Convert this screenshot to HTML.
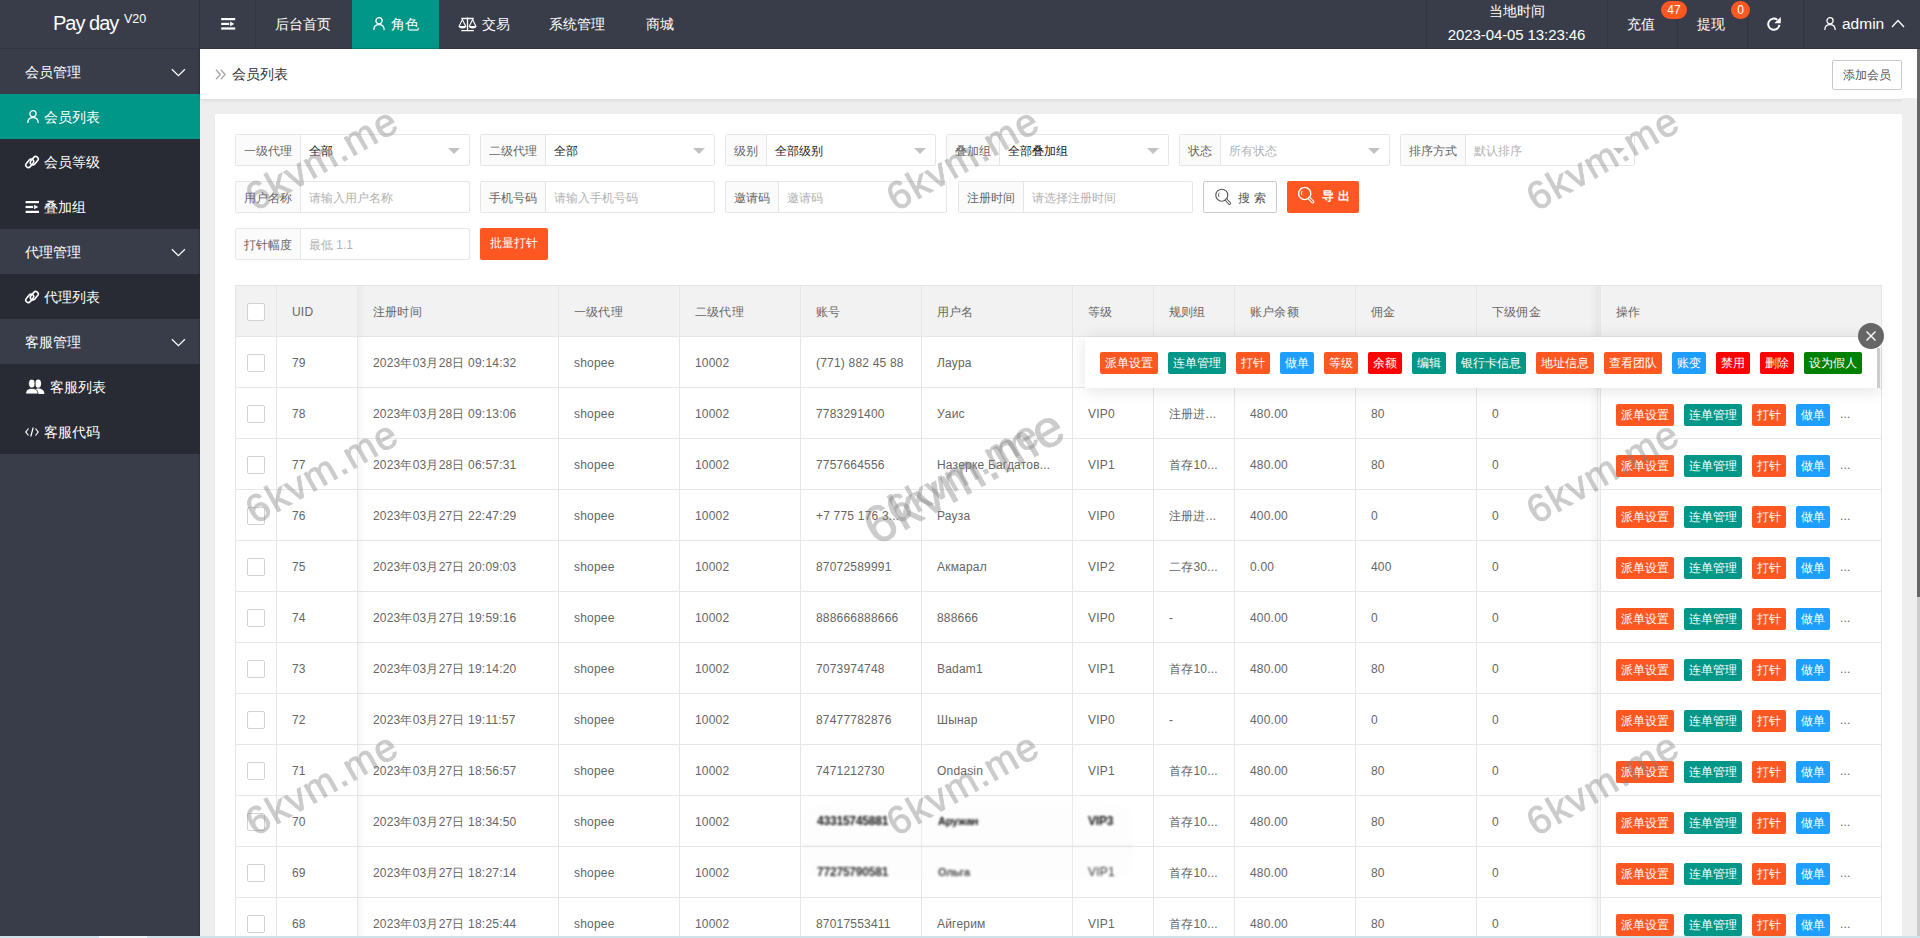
<!DOCTYPE html><html><head><meta charset="utf-8"><title>Pay day</title><style>
*{margin:0;padding:0;box-sizing:border-box}
html,body{width:1920px;height:938px;overflow:hidden;background:#eee;font-family:"Liberation Sans",sans-serif;color:#666;font-size:12px}
.abs{position:absolute}
#hdr{position:absolute;left:0;top:0;width:1920px;height:49px;background:#393D49}
.logo{position:absolute;left:0;top:0;width:199px;height:48px;color:#fff}
.sep{position:absolute;top:0;width:1px;height:48px;background:#32363f}
.nav{position:absolute;top:0;height:49px;color:#fff;font-size:14px;line-height:48px;white-space:nowrap}
.nav.on{background:#009688}
#side{position:absolute;left:0;top:49px;width:200px;height:889px;background:#393D49;box-shadow:inset -1px 0 0 #30343e}
#sideline{position:absolute;left:199px;top:0;width:1px;height:48px;background:#2f323c}
.si{position:absolute;left:0;width:200px;height:45px;line-height:45px;color:#fff;font-size:14px;white-space:nowrap}
.si.c{background:#282B33}
.si.on{background:#009688}
#bread{position:absolute;left:200px;top:49px;width:1717px;height:50px;background:#fff;box-shadow:0 1px 4px rgba(0,0,0,.1)}
#card{position:absolute;left:215px;top:114px;width:1687px;height:830px;background:#fff;box-shadow:0 1px 2px rgba(0,0,0,.06)}
.fi{position:absolute;height:32px;border:1px solid #e6e6e6;border-radius:2px;background:#fff}
.fl{position:absolute;left:0;top:0;height:30px;line-height:32px;background:#FBFBFB;border-right:1px solid #e6e6e6;color:#666;padding:0 8px;font-size:12px;white-space:nowrap}
.fv{position:absolute;top:0;height:30px;line-height:32px;font-size:12px;white-space:nowrap}
.fv.ph{color:#b2b2b2}
.fv.val{color:#222}
.tri{position:absolute;top:13px;width:0;height:0;border-left:6px solid transparent;border-right:6px solid transparent;border-top:6px solid #c2c2c2}
.btn{position:absolute;height:32px;line-height:30px;border-radius:2px;font-size:12px;text-align:center;white-space:nowrap}
#tbl{position:absolute;left:235px;top:285px;width:1647px;height:660px;border:1px solid #e6e6e6;background:#fff;overflow:hidden}
.th{position:absolute;left:0;top:0;width:1647px;height:51px;background:#F2F2F2;border-bottom:1px solid #e6e6e6}
.vl{position:absolute;top:0;width:1px;height:660px;background:#e6e6e6}
.hl{position:absolute;left:0;width:1647px;height:1px;background:#e6e6e6}
.t{position:absolute;white-space:nowrap;font-size:12px;color:#666;line-height:16px;letter-spacing:0.2px}
.cb{position:absolute;width:18px;height:18px;border:1px solid #d2d2d2;border-radius:2px;background:#fff}
.b{position:absolute;height:22px;line-height:22px;padding:0 5px;font-size:12px;color:#fff;border-radius:2px;white-space:nowrap}
.or{background:#FF5722}.tl{background:#009688}.bl{background:#1E9FFF}.rd{background:#FF0000}.gr{background:#008000}
.wm{position:absolute;font-family:"Liberation Sans",sans-serif;font-weight:normal;color:#808080;-webkit-text-stroke:0.9px #808080;opacity:.4;letter-spacing:1.4px;white-space:nowrap;transform-origin:center center;pointer-events:none}
</style></head><body>
<div id="hdr">
<div class="logo"><span class="abs" style="left:53px;top:11px;font-size:20px;line-height:24px;letter-spacing:-1px">Pay day</span><span class="abs" style="left:124px;top:11px;font-size:12.5px;line-height:16px">V20</span></div>
</div>
<div id="sideline"></div>
<div class="sep" style="left:255px"></div>
<svg class="abs" style="left:221px;top:18px" width="15" height="13" viewBox="0 0 15 13"><rect x="0.2" y="0" width="14" height="2.2" fill="#fff"/><rect x="0.2" y="4.8" width="8" height="2.2" fill="#fff"/><rect x="0.2" y="9.4" width="14" height="2.2" fill="#fff"/><path d="M9.1 3.6 L13.3 5.9 L9.1 8.2Z" fill="#fff"/></svg>
<div class="nav" style="left:255px;width:97px;padding-left:20px">后台首页</div>
<div class="nav on" style="left:352px;width:87px;padding-left:39px">角色</div>
<svg class="abs" style="left:373px;top:17px" width="12" height="13" viewBox="0 0 12 13"><circle cx="6" cy="3.8" r="3.1" fill="none" stroke="#fff" stroke-width="1.3"/><path d="M0.8 13 C0.8 9 3 7.6 6 7.6 C9 7.6 11.2 9 11.2 13" fill="none" stroke="#fff" stroke-width="1.3"/></svg>
<div class="nav" style="left:439px;width:90px;padding-left:43px">交易</div>
<svg class="abs" style="left:457px;top:16px" width="21" height="16" viewBox="0 0 21 16"><path d="M4.3 2.5 H16.8 M10.5 1.3 V14.6 M4.3 14.6 H16.8" stroke="#fff" stroke-width="1.3" fill="none"/><path d="M5.4 3.6 L2 10.5 H8.8Z M15.6 3.6 L12.2 10.5 H19Z" stroke="#fff" stroke-width="1.1" fill="none" stroke-linejoin="round"/><path d="M1.9 10.3 A3.5 2.2 0 0 0 8.9 10.3Z M12.1 10.3 A3.5 2.2 0 0 0 19.1 10.3Z" fill="#fff"/></svg>
<div class="nav" style="left:529px;width:97px;padding-left:20px">系统管理</div>
<div class="nav" style="left:626px;width:68px;padding-left:20px">商城</div>
<div class="sep" style="left:1426px"></div>
<div class="sep" style="left:1607px"></div>
<div class="sep" style="left:1677px"></div>
<div class="sep" style="left:1747px"></div>
<div class="sep" style="left:1803px"></div>
<div class="nav" style="left:1427px;width:179px;line-height:16px;text-align:center"><div class="abs" style="left:0;top:3px;width:179px;text-align:center;font-size:14px">当地时间</div><div class="abs" style="left:0;top:27px;width:179px;text-align:center;font-size:15px;letter-spacing:-0.1px">2023-04-05 13:23:46</div></div>
<div class="nav" style="left:1607px;width:70px;padding-left:20px;top:0px">充值</div>
<div class="abs" style="left:1661px;top:1px;width:26px;height:18px;border-radius:9px;background:#FF5722;color:#fff;font-size:12px;line-height:18px;text-align:center">47</div>
<div class="nav" style="left:1677px;width:70px;padding-left:20px">提现</div>
<div class="abs" style="left:1731px;top:1px;width:19px;height:18px;border-radius:9px;background:#FF5722;color:#fff;font-size:12px;line-height:18px;text-align:center">0</div>
<svg class="abs" style="left:1767px;top:17px" width="15" height="15" viewBox="0 0 15 15"><path d="M12.4 7.8 A5.6 5.6 0 1 1 10.2 2.7" fill="none" stroke="#fff" stroke-width="2"/><path d="M7.3 6.2 L13.8 0 L13.8 6.2Z" fill="#fff"/></svg>
<svg class="abs" style="left:1824px;top:17px" width="12" height="13" viewBox="0 0 12 13"><circle cx="6" cy="3.8" r="3.1" fill="none" stroke="#fff" stroke-width="1.3"/><path d="M0.8 13 C0.8 9 3 7.6 6 7.6 C9 7.6 11.2 9 11.2 13" fill="none" stroke="#fff" stroke-width="1.3"/></svg>
<div class="nav" style="left:1842px;font-size:15.5px">admin</div>
<svg class="abs" style="left:1891px;top:19px" width="14" height="9" viewBox="0 0 14 9"><path d="M1 8 L7 1.5 L13 8" fill="none" stroke="#fff" stroke-width="1.3"/></svg>
<div class="abs" style="left:0;top:48px;width:1920px;height:1px;background:rgba(0,0,0,.12)"></div>
<div id="side">
<div class="si" style="top:0px;padding-left:25px;line-height:47px">会员管理</div>
<svg class="abs" style="left:171px;top:19px" width="15" height="9" viewBox="0 0 15 9"><path d="M0.9 1.3 L7.4 7.6 L13.9 1.3" fill="none" stroke="#fff" stroke-width="1.25"/></svg>
<div class="si on" style="top:45px;padding-left:44px;line-height:47px">会员列表</div>
<div class="si c" style="top:90px;padding-left:44px;line-height:47px">会员等级</div>
<div class="si c" style="top:135px;padding-left:44px;line-height:47px">叠加组</div>
<div class="si" style="top:180px;padding-left:25px;line-height:47px">代理管理</div>
<svg class="abs" style="left:171px;top:199px" width="15" height="9" viewBox="0 0 15 9"><path d="M0.9 1.3 L7.4 7.6 L13.9 1.3" fill="none" stroke="#fff" stroke-width="1.25"/></svg>
<div class="si c" style="top:225px;padding-left:44px;line-height:47px">代理列表</div>
<div class="si" style="top:270px;padding-left:25px;line-height:47px">客服管理</div>
<svg class="abs" style="left:171px;top:289px" width="15" height="9" viewBox="0 0 15 9"><path d="M0.9 1.3 L7.4 7.6 L13.9 1.3" fill="none" stroke="#fff" stroke-width="1.25"/></svg>
<div class="si c" style="top:315px;padding-left:50px;line-height:47px">客服列表</div>
<div class="si c" style="top:360px;padding-left:44px;line-height:47px">客服代码</div>
</div>
<svg class="abs" style="left:27px;top:110px" width="12" height="13" viewBox="0 0 12 13"><circle cx="6" cy="3.8" r="3.1" fill="none" stroke="#fff" stroke-width="1.3"/><path d="M0.8 13 C0.8 9 3 7.6 6 7.6 C9 7.6 11.2 9 11.2 13" fill="none" stroke="#fff" stroke-width="1.3"/></svg>
<svg class="abs" style="left:24px;top:154px" width="16" height="16" viewBox="0 0 16 16"><g transform="rotate(-50 8 8)" fill="none" stroke="#fff" stroke-width="1.6"><rect x="0.8" y="4.6" width="9.4" height="5" rx="2.5"/><rect x="5.8" y="6.4" width="9.4" height="5" rx="2.5"/></g></svg>
<svg class="abs" style="left:24px;top:289px" width="16" height="16" viewBox="0 0 16 16"><g transform="rotate(-50 8 8)" fill="none" stroke="#fff" stroke-width="1.6"><rect x="0.8" y="4.6" width="9.4" height="5" rx="2.5"/><rect x="5.8" y="6.4" width="9.4" height="5" rx="2.5"/></g></svg>
<svg class="abs" style="left:25px;top:201px" width="15" height="13" viewBox="0 0 15 13"><rect x="0.6" y="0" width="13.4" height="2.2" fill="#fff"/><rect x="0.6" y="4.9" width="7.6" height="2.2" fill="#fff"/><rect x="0.6" y="9.8" width="13.4" height="2.2" fill="#fff"/><path d="M9.1 3.7 L13.3 6 L9.1 8.3Z" fill="#fff"/></svg>
<svg class="abs" style="left:25px;top:379px" width="20" height="16" viewBox="0 0 20 16"><ellipse cx="13.2" cy="4.6" rx="2.9" ry="4.2" fill="#fff"/><path d="M8.5 15 C8.7 11 10.5 9.6 13.2 9.6 C16.5 9.6 19.2 11 19.4 15Z" fill="#fff"/><ellipse cx="6.8" cy="4.6" rx="3.2" ry="4.4" fill="#fff" stroke="#282B33" stroke-width="0.9"/><path d="M0.6 15 C0.8 11 3 9.4 6.8 9.4 C10.6 9.4 12.8 11 13 15Z" fill="#fff" stroke="#282B33" stroke-width="0.9"/></svg>
<svg class="abs" style="left:25px;top:427px" width="14" height="10" viewBox="0 0 14 10"><path d="M3.5 1.5 L0.8 5 L3.5 8.5 M10.5 1.5 L13.2 5 L10.5 8.5 M8.2 0.5 L5.8 9.5" fill="none" stroke="#fff" stroke-width="1.2"/></svg>
<div id="bread"></div>
<svg class="abs" style="left:215px;top:69px" width="12" height="11" viewBox="0 0 12 11"><path d="M1 0.8 L5.3 5.5 L1 10.2 M5.8 0.8 L10.1 5.5 L5.8 10.2" fill="none" stroke="#aaa" stroke-width="1.4"/></svg>
<div class="t" style="left:232px;top:66px;font-size:14px;color:#333;line-height:16px;letter-spacing:0">会员列表</div>
<div class="btn" style="left:1832px;top:60px;width:70px;height:30px;line-height:28px;border:1px solid #C9C9C9;background:#fff;color:#555">添加会员</div>
<div id="card"></div>
<div class="fi" style="left:235px;top:134px;width:235px">
<div class="fl" style="width:65px">一级代理</div>
<div class="fv val" style="left:73px">全部</div>
<div class="tri" style="left:212px"></div>
</div>
<div class="fi" style="left:480px;top:134px;width:235px">
<div class="fl" style="width:65px">二级代理</div>
<div class="fv val" style="left:73px">全部</div>
<div class="tri" style="left:212px"></div>
</div>
<div class="fi" style="left:725px;top:134px;width:211px">
<div class="fl" style="width:41px">级别</div>
<div class="fv val" style="left:49px">全部级别</div>
<div class="tri" style="left:188px"></div>
</div>
<div class="fi" style="left:946px;top:134px;width:223px">
<div class="fl" style="width:53px">叠加组</div>
<div class="fv val" style="left:61px">全部叠加组</div>
<div class="tri" style="left:200px"></div>
</div>
<div class="fi" style="left:1179px;top:134px;width:211px">
<div class="fl" style="width:41px">状态</div>
<div class="fv ph" style="left:49px">所有状态</div>
<div class="tri" style="left:188px"></div>
</div>
<div class="fi" style="left:1400px;top:134px;width:235px">
<div class="fl" style="width:65px">排序方式</div>
<div class="fv ph" style="left:73px">默认排序</div>
<div class="tri" style="left:212px"></div>
</div>
<div class="fi" style="left:235px;top:181px;width:235px">
<div class="fl" style="width:65px">用户名称</div>
<div class="fv ph" style="left:73px">请输入用户名称</div>
</div>
<div class="fi" style="left:480px;top:181px;width:235px">
<div class="fl" style="width:65px">手机号码</div>
<div class="fv ph" style="left:73px">请输入手机号码</div>
</div>
<div class="fi" style="left:725px;top:181px;width:222px">
<div class="fl" style="width:53px">邀请码</div>
<div class="fv ph" style="left:61px">邀请码</div>
</div>
<div class="fi" style="left:958px;top:181px;width:235px">
<div class="fl" style="width:65px">注册时间</div>
<div class="fv ph" style="left:73px">请选择注册时间</div>
</div>
<div class="fi" style="left:235px;top:228px;width:235px">
<div class="fl" style="width:65px">打针幅度</div>
<div class="fv ph" style="left:73px">最低 1.1</div>
</div>
<div class="btn" style="left:1203px;top:181px;width:74px;height:32px;border:1px solid #C9C9C9;background:#fff;color:#555"></div>
<svg class="abs" style="left:1214px;top:188px" width="18" height="18" viewBox="0 0 18 18"><circle cx="7.8" cy="7.2" r="6" fill="none" stroke="#555" stroke-width="1.1"/><path d="M12.3 11.9 L15.6 15.4" stroke="#555" stroke-width="3" stroke-linecap="round"/><path d="M12.3 11.9 L15.6 15.4" stroke="#fff" stroke-width="1.2" stroke-linecap="round"/><path d="M5.2 4.8 A3.6 3.6 0 0 0 5 9" stroke="#555" stroke-width="0.9" fill="none"/></svg>
<div class="t" style="left:1238px;top:190px;color:#555;letter-spacing:4px">搜索</div>
<div class="btn" style="left:1287px;top:181px;width:72px;height:32px;background:#FF5722;color:#fff"></div>
<svg class="abs" style="left:1297px;top:186px" width="18" height="18" viewBox="0 0 18 18"><circle cx="7.7" cy="7.5" r="6.1" fill="none" stroke="#fff" stroke-width="1.4"/><path d="M12.3 12.3 L15.7 15.9" stroke="#fff" stroke-width="3.2" stroke-linecap="round"/><path d="M12.3 12.3 L15.7 15.9" stroke="#FF5722" stroke-width="1.1" stroke-linecap="round"/><path d="M5.2 5 A3.6 3.6 0 0 0 5 9.2" stroke="#fff" stroke-width="1" fill="none"/></svg>
<div class="t" style="left:1322px;top:188px;color:#fff;letter-spacing:4px;font-weight:bold">导出</div>
<div class="btn" style="left:480px;top:228px;width:68px;background:#FF5722;color:#fff;line-height:30px">批量打针</div>
<div id="tbl">
<div class="th"></div>
<div class="vl" style="left:40px"></div>
<div class="vl" style="left:121px"></div>
<div class="vl" style="left:322px"></div>
<div class="vl" style="left:443px"></div>
<div class="vl" style="left:564px"></div>
<div class="vl" style="left:685px"></div>
<div class="vl" style="left:836px"></div>
<div class="vl" style="left:917px"></div>
<div class="vl" style="left:998px"></div>
<div class="vl" style="left:1119px"></div>
<div class="vl" style="left:1240px"></div>
<div class="vl" style="left:1361px"></div>
<div class="hl" style="top:101px"></div>
<div class="hl" style="top:152px"></div>
<div class="hl" style="top:203px"></div>
<div class="hl" style="top:254px"></div>
<div class="hl" style="top:305px"></div>
<div class="hl" style="top:356px"></div>
<div class="hl" style="top:407px"></div>
<div class="hl" style="top:458px"></div>
<div class="hl" style="top:509px"></div>
<div class="hl" style="top:560px"></div>
<div class="hl" style="top:611px"></div>
<div class="hl" style="top:662px"></div>
</div>
<div class="t" style="left:292px;top:304px;">UID</div>
<div class="t" style="left:373px;top:304px;">注册时间</div>
<div class="t" style="left:574px;top:304px;">一级代理</div>
<div class="t" style="left:695px;top:304px;">二级代理</div>
<div class="t" style="left:816px;top:304px;">账号</div>
<div class="t" style="left:937px;top:304px;">用户名</div>
<div class="t" style="left:1088px;top:304px;">等级</div>
<div class="t" style="left:1169px;top:304px;">规则组</div>
<div class="t" style="left:1250px;top:304px;">账户余额</div>
<div class="t" style="left:1371px;top:304px;">佣金</div>
<div class="t" style="left:1492px;top:304px;">下级佣金</div>
<div class="cb" style="left:247px;top:354px"></div>
<div class="t" style="left:292px;top:355px;">79</div>
<div class="t" style="left:373px;top:355px;">2023年03月28日 09:14:32</div>
<div class="t" style="left:574px;top:355px;">shopee</div>
<div class="t" style="left:695px;top:355px;">10002</div>
<div class="t" style="left:816px;top:355px;">(771) 882 45 88</div>
<div class="t" style="left:937px;top:355px;">Лаура</div>
<div class="cb" style="left:247px;top:405px"></div>
<div class="t" style="left:292px;top:406px;">78</div>
<div class="t" style="left:373px;top:406px;">2023年03月28日 09:13:06</div>
<div class="t" style="left:574px;top:406px;">shopee</div>
<div class="t" style="left:695px;top:406px;">10002</div>
<div class="t" style="left:816px;top:406px;">7783291400</div>
<div class="t" style="left:937px;top:406px;">Уаис</div>
<div class="t" style="left:1088px;top:406px;">VIP0</div>
<div class="t" style="left:1169px;top:406px;">注册进...</div>
<div class="t" style="left:1250px;top:406px;">480.00</div>
<div class="t" style="left:1371px;top:406px;">80</div>
<div class="t" style="left:1492px;top:406px;">0</div>
<div class="cb" style="left:247px;top:456px"></div>
<div class="t" style="left:292px;top:457px;">77</div>
<div class="t" style="left:373px;top:457px;">2023年03月28日 06:57:31</div>
<div class="t" style="left:574px;top:457px;">shopee</div>
<div class="t" style="left:695px;top:457px;">10002</div>
<div class="t" style="left:816px;top:457px;">7757664556</div>
<div class="t" style="left:937px;top:457px;">Назерке Багдатов...</div>
<div class="t" style="left:1088px;top:457px;">VIP1</div>
<div class="t" style="left:1169px;top:457px;">首存10...</div>
<div class="t" style="left:1250px;top:457px;">480.00</div>
<div class="t" style="left:1371px;top:457px;">80</div>
<div class="t" style="left:1492px;top:457px;">0</div>
<div class="cb" style="left:247px;top:507px"></div>
<div class="t" style="left:292px;top:508px;">76</div>
<div class="t" style="left:373px;top:508px;">2023年03月27日 22:47:29</div>
<div class="t" style="left:574px;top:508px;">shopee</div>
<div class="t" style="left:695px;top:508px;">10002</div>
<div class="t" style="left:816px;top:508px;">+7 775 176 3...</div>
<div class="t" style="left:937px;top:508px;">Рауза</div>
<div class="t" style="left:1088px;top:508px;">VIP0</div>
<div class="t" style="left:1169px;top:508px;">注册进...</div>
<div class="t" style="left:1250px;top:508px;">400.00</div>
<div class="t" style="left:1371px;top:508px;">0</div>
<div class="t" style="left:1492px;top:508px;">0</div>
<div class="cb" style="left:247px;top:558px"></div>
<div class="t" style="left:292px;top:559px;">75</div>
<div class="t" style="left:373px;top:559px;">2023年03月27日 20:09:03</div>
<div class="t" style="left:574px;top:559px;">shopee</div>
<div class="t" style="left:695px;top:559px;">10002</div>
<div class="t" style="left:816px;top:559px;">87072589991</div>
<div class="t" style="left:937px;top:559px;">Акмарал</div>
<div class="t" style="left:1088px;top:559px;">VIP2</div>
<div class="t" style="left:1169px;top:559px;">二存30...</div>
<div class="t" style="left:1250px;top:559px;">0.00</div>
<div class="t" style="left:1371px;top:559px;">400</div>
<div class="t" style="left:1492px;top:559px;">0</div>
<div class="cb" style="left:247px;top:609px"></div>
<div class="t" style="left:292px;top:610px;">74</div>
<div class="t" style="left:373px;top:610px;">2023年03月27日 19:59:16</div>
<div class="t" style="left:574px;top:610px;">shopee</div>
<div class="t" style="left:695px;top:610px;">10002</div>
<div class="t" style="left:816px;top:610px;">888666888666</div>
<div class="t" style="left:937px;top:610px;">888666</div>
<div class="t" style="left:1088px;top:610px;">VIP0</div>
<div class="t" style="left:1169px;top:610px;">-</div>
<div class="t" style="left:1250px;top:610px;">400.00</div>
<div class="t" style="left:1371px;top:610px;">0</div>
<div class="t" style="left:1492px;top:610px;">0</div>
<div class="cb" style="left:247px;top:660px"></div>
<div class="t" style="left:292px;top:661px;">73</div>
<div class="t" style="left:373px;top:661px;">2023年03月27日 19:14:20</div>
<div class="t" style="left:574px;top:661px;">shopee</div>
<div class="t" style="left:695px;top:661px;">10002</div>
<div class="t" style="left:816px;top:661px;">7073974748</div>
<div class="t" style="left:937px;top:661px;">Badam1</div>
<div class="t" style="left:1088px;top:661px;">VIP1</div>
<div class="t" style="left:1169px;top:661px;">首存10...</div>
<div class="t" style="left:1250px;top:661px;">480.00</div>
<div class="t" style="left:1371px;top:661px;">80</div>
<div class="t" style="left:1492px;top:661px;">0</div>
<div class="cb" style="left:247px;top:711px"></div>
<div class="t" style="left:292px;top:712px;">72</div>
<div class="t" style="left:373px;top:712px;">2023年03月27日 19:11:57</div>
<div class="t" style="left:574px;top:712px;">shopee</div>
<div class="t" style="left:695px;top:712px;">10002</div>
<div class="t" style="left:816px;top:712px;">87477782876</div>
<div class="t" style="left:937px;top:712px;">Шынар</div>
<div class="t" style="left:1088px;top:712px;">VIP0</div>
<div class="t" style="left:1169px;top:712px;">-</div>
<div class="t" style="left:1250px;top:712px;">400.00</div>
<div class="t" style="left:1371px;top:712px;">0</div>
<div class="t" style="left:1492px;top:712px;">0</div>
<div class="cb" style="left:247px;top:762px"></div>
<div class="t" style="left:292px;top:763px;">71</div>
<div class="t" style="left:373px;top:763px;">2023年03月27日 18:56:57</div>
<div class="t" style="left:574px;top:763px;">shopee</div>
<div class="t" style="left:695px;top:763px;">10002</div>
<div class="t" style="left:816px;top:763px;">7471212730</div>
<div class="t" style="left:937px;top:763px;">Ondasin</div>
<div class="t" style="left:1088px;top:763px;">VIP1</div>
<div class="t" style="left:1169px;top:763px;">首存10...</div>
<div class="t" style="left:1250px;top:763px;">480.00</div>
<div class="t" style="left:1371px;top:763px;">80</div>
<div class="t" style="left:1492px;top:763px;">0</div>
<div class="cb" style="left:247px;top:813px"></div>
<div class="t" style="left:292px;top:814px;">70</div>
<div class="t" style="left:373px;top:814px;">2023年03月27日 18:34:50</div>
<div class="t" style="left:574px;top:814px;">shopee</div>
<div class="t" style="left:695px;top:814px;">10002</div>
<div class="t" style="left:1169px;top:814px;">首存10...</div>
<div class="t" style="left:1250px;top:814px;">480.00</div>
<div class="t" style="left:1371px;top:814px;">80</div>
<div class="t" style="left:1492px;top:814px;">0</div>
<div class="cb" style="left:247px;top:864px"></div>
<div class="t" style="left:292px;top:865px;">69</div>
<div class="t" style="left:373px;top:865px;">2023年03月27日 18:27:14</div>
<div class="t" style="left:574px;top:865px;">shopee</div>
<div class="t" style="left:695px;top:865px;">10002</div>
<div class="t" style="left:1169px;top:865px;">首存10...</div>
<div class="t" style="left:1250px;top:865px;">480.00</div>
<div class="t" style="left:1371px;top:865px;">80</div>
<div class="t" style="left:1492px;top:865px;">0</div>
<div class="cb" style="left:247px;top:915px"></div>
<div class="t" style="left:292px;top:916px;">68</div>
<div class="t" style="left:373px;top:916px;">2023年03月27日 18:25:44</div>
<div class="t" style="left:574px;top:916px;">shopee</div>
<div class="t" style="left:695px;top:916px;">10002</div>
<div class="t" style="left:816px;top:916px;">87017553411</div>
<div class="t" style="left:937px;top:916px;">Айгерим</div>
<div class="t" style="left:1088px;top:916px;">VIP1</div>
<div class="t" style="left:1169px;top:916px;">首存10...</div>
<div class="t" style="left:1250px;top:916px;">480.00</div>
<div class="t" style="left:1371px;top:916px;">80</div>
<div class="t" style="left:1492px;top:916px;">0</div>
<div class="cb" style="left:247px;top:303px"></div>
<div class="abs" style="left:803px;top:804px;width:332px;height:76px;border-radius:22px;background:rgba(250,250,250,.3);filter:blur(3px)"></div>
<div class="abs" style="left:803px;top:845px;width:330px;height:2px;background:rgba(0,0,0,.05);filter:blur(0.8px)"></div>
<div class="t" style="left:817px;top:813px;color:#111;filter:blur(0.8px);letter-spacing:-0.2px;font-weight:bold;">43315745881</div>
<div class="t" style="left:817px;top:864px;color:#111;filter:blur(0.8px);letter-spacing:-0.2px;font-weight:bold;color:#333">77275790581</div>
<div class="t" style="left:938px;top:813px;color:#111;filter:blur(0.8px);letter-spacing:-0.2px;font-weight:bold;font-size:11px">Аружан</div>
<div class="t" style="left:938px;top:864px;color:#111;filter:blur(0.8px);letter-spacing:-0.2px;font-weight:bold;font-size:11px;color:#444">Ольга</div>
<div class="t" style="left:1088px;top:813px;color:#111;filter:blur(0.8px);letter-spacing:-0.2px;font-weight:bold;">VIP3</div>
<div class="t" style="left:1088px;top:864px;filter:blur(0.8px);color:#333">VIP1</div>
<div class="abs" style="left:1589px;top:286px;width:8px;height:660px;background:linear-gradient(to right,rgba(0,0,0,0),rgba(0,0,0,.035))"></div>
<div class="abs" style="left:358px;top:286px;width:8px;height:660px;background:linear-gradient(to left,rgba(0,0,0,0),rgba(0,0,0,.03))"></div>
<div class="abs" style="left:1598px;top:286px;width:283px;height:660px;background:#fff"></div>
<div class="abs" style="left:1598px;top:286px;width:283px;height:50px;background:#F2F2F2"></div>
<div class="abs" style="left:1598px;top:286px;width:2px;height:50px;background:#e9e9e9"></div>
<div class="abs" style="left:1598px;top:336px;width:2px;height:610px;background:#f6f6f6"></div>
<div class="abs" style="left:1598px;top:336px;width:283px;height:1px;background:#e6e6e6"></div>
<div class="abs" style="left:1598px;top:387px;width:283px;height:1px;background:#e6e6e6"></div>
<div class="abs" style="left:1598px;top:438px;width:283px;height:1px;background:#e6e6e6"></div>
<div class="abs" style="left:1598px;top:489px;width:283px;height:1px;background:#e6e6e6"></div>
<div class="abs" style="left:1598px;top:540px;width:283px;height:1px;background:#e6e6e6"></div>
<div class="abs" style="left:1598px;top:591px;width:283px;height:1px;background:#e6e6e6"></div>
<div class="abs" style="left:1598px;top:642px;width:283px;height:1px;background:#e6e6e6"></div>
<div class="abs" style="left:1598px;top:693px;width:283px;height:1px;background:#e6e6e6"></div>
<div class="abs" style="left:1598px;top:744px;width:283px;height:1px;background:#e6e6e6"></div>
<div class="abs" style="left:1598px;top:795px;width:283px;height:1px;background:#e6e6e6"></div>
<div class="abs" style="left:1598px;top:846px;width:283px;height:1px;background:#e6e6e6"></div>
<div class="abs" style="left:1598px;top:897px;width:283px;height:1px;background:#e6e6e6"></div>
<div class="abs" style="left:1600px;top:286px;width:1px;height:660px;background:#e6e6e6"></div>
<div class="t" style="left:1616px;top:304px;">操作</div>
<div class="b or" style="left:1616px;top:404px">派单设置</div>
<div class="b tl" style="left:1684px;top:404px">连单管理</div>
<div class="b or" style="left:1752px;top:404px">打针</div>
<div class="b bl" style="left:1796px;top:404px">做单</div>
<div class="t" style="left:1840px;top:406px;color:#666">...</div>
<div class="b or" style="left:1616px;top:455px">派单设置</div>
<div class="b tl" style="left:1684px;top:455px">连单管理</div>
<div class="b or" style="left:1752px;top:455px">打针</div>
<div class="b bl" style="left:1796px;top:455px">做单</div>
<div class="t" style="left:1840px;top:457px;color:#666">...</div>
<div class="b or" style="left:1616px;top:506px">派单设置</div>
<div class="b tl" style="left:1684px;top:506px">连单管理</div>
<div class="b or" style="left:1752px;top:506px">打针</div>
<div class="b bl" style="left:1796px;top:506px">做单</div>
<div class="t" style="left:1840px;top:508px;color:#666">...</div>
<div class="b or" style="left:1616px;top:557px">派单设置</div>
<div class="b tl" style="left:1684px;top:557px">连单管理</div>
<div class="b or" style="left:1752px;top:557px">打针</div>
<div class="b bl" style="left:1796px;top:557px">做单</div>
<div class="t" style="left:1840px;top:559px;color:#666">...</div>
<div class="b or" style="left:1616px;top:608px">派单设置</div>
<div class="b tl" style="left:1684px;top:608px">连单管理</div>
<div class="b or" style="left:1752px;top:608px">打针</div>
<div class="b bl" style="left:1796px;top:608px">做单</div>
<div class="t" style="left:1840px;top:610px;color:#666">...</div>
<div class="b or" style="left:1616px;top:659px">派单设置</div>
<div class="b tl" style="left:1684px;top:659px">连单管理</div>
<div class="b or" style="left:1752px;top:659px">打针</div>
<div class="b bl" style="left:1796px;top:659px">做单</div>
<div class="t" style="left:1840px;top:661px;color:#666">...</div>
<div class="b or" style="left:1616px;top:710px">派单设置</div>
<div class="b tl" style="left:1684px;top:710px">连单管理</div>
<div class="b or" style="left:1752px;top:710px">打针</div>
<div class="b bl" style="left:1796px;top:710px">做单</div>
<div class="t" style="left:1840px;top:712px;color:#666">...</div>
<div class="b or" style="left:1616px;top:761px">派单设置</div>
<div class="b tl" style="left:1684px;top:761px">连单管理</div>
<div class="b or" style="left:1752px;top:761px">打针</div>
<div class="b bl" style="left:1796px;top:761px">做单</div>
<div class="t" style="left:1840px;top:763px;color:#666">...</div>
<div class="b or" style="left:1616px;top:812px">派单设置</div>
<div class="b tl" style="left:1684px;top:812px">连单管理</div>
<div class="b or" style="left:1752px;top:812px">打针</div>
<div class="b bl" style="left:1796px;top:812px">做单</div>
<div class="t" style="left:1840px;top:814px;color:#666">...</div>
<div class="b or" style="left:1616px;top:863px">派单设置</div>
<div class="b tl" style="left:1684px;top:863px">连单管理</div>
<div class="b or" style="left:1752px;top:863px">打针</div>
<div class="b bl" style="left:1796px;top:863px">做单</div>
<div class="t" style="left:1840px;top:865px;color:#666">...</div>
<div class="b or" style="left:1616px;top:914px">派单设置</div>
<div class="b tl" style="left:1684px;top:914px">连单管理</div>
<div class="b or" style="left:1752px;top:914px">打针</div>
<div class="b bl" style="left:1796px;top:914px">做单</div>
<div class="t" style="left:1840px;top:916px;color:#666">...</div>
<div class="abs" style="left:1085px;top:337px;width:795px;height:51px;background:#fff;box-shadow:1px 2px 16px rgba(0,0,0,.12)"></div>
<div class="abs" style="left:1877px;top:348px;width:3px;height:40px;background:#ccc"></div>
<div class="abs" style="left:1882px;top:310px;width:20px;height:100px;background:linear-gradient(to right,rgba(255,255,255,.5),#fff 40%)"></div>
<div class="b or" style="left:1100px;top:352px">派单设置</div>
<div class="b tl" style="left:1168px;top:352px">连单管理</div>
<div class="b or" style="left:1236px;top:352px">打针</div>
<div class="b bl" style="left:1280px;top:352px">做单</div>
<div class="b or" style="left:1324px;top:352px">等级</div>
<div class="b rd" style="left:1368px;top:352px">余额</div>
<div class="b tl" style="left:1412px;top:352px">编辑</div>
<div class="b tl" style="left:1456px;top:352px">银行卡信息</div>
<div class="b or" style="left:1536px;top:352px">地址信息</div>
<div class="b or" style="left:1604px;top:352px">查看团队</div>
<div class="b bl" style="left:1672px;top:352px">账变</div>
<div class="b rd" style="left:1716px;top:352px">禁用</div>
<div class="b rd" style="left:1760px;top:352px">删除</div>
<div class="b gr" style="left:1804px;top:352px">设为假人</div>
<div class="abs" style="left:1858px;top:323px;width:26px;height:26px;border-radius:13px;background:#666"></div>
<svg class="abs" style="left:1858px;top:323px" width="26" height="26" viewBox="0 0 26 26"><path d="M8.5 8.5 L17.5 17.5 M17.5 8.5 L8.5 17.5" stroke="#fff" stroke-width="1.4"/></svg>
<div class="abs" style="left:1917px;top:49px;width:3px;height:548px;background:#666"></div>
<div class="abs" style="left:1917px;top:597px;width:3px;height:341px;background:#ccc"></div>
<div class="abs" style="left:1902px;top:98px;width:15px;height:840px;background:#eee"></div>
<div class="abs" style="left:0;top:936px;width:1920px;height:2px;background:#cfe2ea"></div>
<div class="abs" style="left:99px;top:936px;width:48px;height:2px;background:#eef5f8"></div>
<div class="wm" style="left:172px;top:129px;width:300px;height:60px;line-height:60px;text-align:center;font-size:39.0px;transform:rotate(-29.5deg)">6kvm.me</div>
<div class="wm" style="left:813px;top:129px;width:300px;height:60px;line-height:60px;text-align:center;font-size:39.0px;transform:rotate(-29.5deg)">6kvm.me</div>
<div class="wm" style="left:1453px;top:129px;width:300px;height:60px;line-height:60px;text-align:center;font-size:39.0px;transform:rotate(-29.5deg)">6kvm.me</div>
<div class="wm" style="left:172px;top:442px;width:300px;height:60px;line-height:60px;text-align:center;font-size:39.0px;transform:rotate(-29.5deg)">6kvm.me</div>
<div class="wm" style="left:813px;top:442px;width:300px;height:60px;line-height:60px;text-align:center;font-size:39.0px;transform:rotate(-29.5deg)">6kvm.me</div>
<div class="wm" style="left:1453px;top:442px;width:300px;height:60px;line-height:60px;text-align:center;font-size:39.0px;transform:rotate(-29.5deg)">6kvm.me</div>
<div class="wm" style="left:172px;top:754px;width:300px;height:60px;line-height:60px;text-align:center;font-size:39.0px;transform:rotate(-29.5deg)">6kvm.me</div>
<div class="wm" style="left:813px;top:754px;width:300px;height:60px;line-height:60px;text-align:center;font-size:39.0px;transform:rotate(-29.5deg)">6kvm.me</div>
<div class="wm" style="left:1453px;top:754px;width:300px;height:60px;line-height:60px;text-align:center;font-size:39.0px;transform:rotate(-29.5deg)">6kvm.me</div>
<div class="wm" style="left:814px;top:446px;width:300px;height:60px;line-height:60px;text-align:center;font-size:52.3px;transform:rotate(-29.5deg)">6kvm.me</div>
</body></html>
